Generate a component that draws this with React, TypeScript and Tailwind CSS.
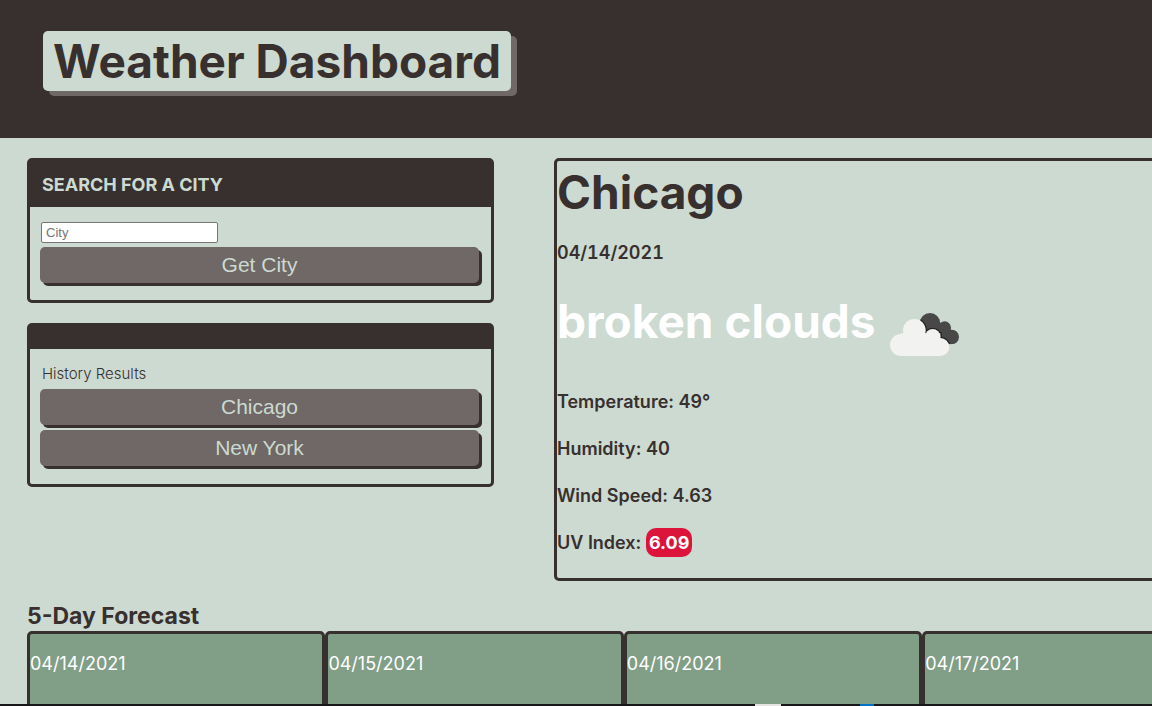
import type { ReactNode } from "react";

const forecastDates = ["04/14/2021", "04/15/2021", "04/16/2021", "04/17/2021", "04/18/2021"];
const cityHistory = ["Chicago", "New York"];

function CityButton({ children }: { children: ReactNode }) {
  return (
    <button
      type="button"
      className="block h-9 w-full rounded-[5px] bg-[#6f6866] font-['Liberation_Sans',sans-serif] text-[21px] leading-9 text-[#ccdad1] shadow-[3px_3px_0_#38302e]"
    >
      {children}
    </button>
  );
}

function CloudShape() {
  return (
    <>
      <circle cx="133" cy="121" r="34" />
      <circle cx="93" cy="165" r="33" />
      <circle cx="188" cy="140" r="23" />
      <circle cx="211" cy="171" r="27" />
      <rect x="93" y="130" width="118" height="68" />
    </>
  );
}

function BrokenCloudsIcon() {
  return (
    <svg className="h-20 w-[100px]" viewBox="18 -9 300 240" role="img" aria-label="broken clouds">
      <defs>
        <clipPath id="rear-cloud">
          <circle cx="180" cy="100" r="31" />
          <circle cx="224" cy="113" r="19" />
          <circle cx="245" cy="141" r="22" />
          <path d="M155 100H224L245 141V163H160Z" />
        </clipPath>
      </defs>
      <g clipPath="url(#rear-cloud)">
        <rect x="140" y="60" width="140" height="110" fill="#484849" />
        <g fill="#222" stroke="#222" strokeWidth="8">
          <CloudShape />
        </g>
      </g>
      <g fill="#f2f2f0">
        <CloudShape />
      </g>
    </svg>
  );
}

export default function App() {
  return (
    <div className="h-screen overflow-hidden bg-[#ccdad1] font-['Inter',sans-serif] text-[#38302e]">
      <div className="min-w-[1546px]">
        <header className="bg-[#38302e] px-[43px] pt-[31px] pb-[47px]">
          <h1 className="w-fit rounded-[5px] bg-[#ccdad1] px-[10px] text-[46px] leading-[60px] font-bold shadow-[6px_5px_0_#6f6866]">
            Weather Dashboard
          </h1>
        </header>

        <main className="px-[27px] pt-5">
          <div className="flex items-start gap-[60px]">
            <aside className="flex w-[467px] shrink-0 flex-col gap-5">
              <section className="rounded-[5px] border-[3px] border-[#38302e]">
                <h2 className="bg-[#38302e] px-3 pt-[11px] pb-[10px] text-[18px] leading-[25px] font-bold text-[#ccdad1]">
                  <label htmlFor="city">SEARCH FOR A CITY</label>
                </h2>
                <form className="pt-[15px] pr-3 pb-[17px] pl-[10px]" onSubmit={(e) => e.preventDefault()}>
                  <input
                    id="city"
                    type="text"
                    placeholder="City"
                    className="mb-1 ml-px block h-[21px] w-[177px] rounded-[2px] border border-[#767676] bg-white px-1 font-['Liberation_Sans',sans-serif] text-[13px] placeholder:text-[#757575]"
                  />
                  <CityButton>Get City</CityButton>
                </form>
              </section>

              <section className="rounded-[5px] border-[3px] border-[#38302e]">
                <div className="h-[23px] bg-[#38302e]" />
                <div className="pt-[14px] pr-3 pb-[18px] pl-[10px]">
                  <p className="mb-[5px] px-0.5 text-[15px] leading-[21px] font-light">History Results</p>
                  <div className="flex flex-col gap-[5px]">
                    {cityHistory.map((city) => (
                      <CityButton key={city}>{city}</CityButton>
                    ))}
                  </div>
                </div>
              </section>
            </aside>

            <section className="flex grow flex-col gap-[22px] rounded-[5px] border-[3px] border-[#38302e] pb-[23px] text-[18px] leading-[25px] font-semibold">
              <div className="flex flex-col gap-[17px]">
                <h2 className="text-[46px] leading-[62px] font-bold">Chicago</h2>
                <p className="tabular-nums">04/14/2021</p>
              </div>
              <div className="flex h-20 items-start text-white">
                <h3 className="pt-[3px] text-[46px] leading-[62px] font-bold">broken clouds</h3>
                <BrokenCloudsIcon />
              </div>
              <p>Temperature: 49°</p>
              <p>Humidity: 40</p>
              <p>Wind Speed: 4.63</p>
              <p>
                UV Index: <span className="rounded-[10px] bg-[#dc143c] px-[3px] py-1 font-bold text-white">6.09</span>
              </p>
            </section>
          </div>

          <h2 className="pt-5 text-[23px] leading-[30px] font-bold">5-Day Forecast</h2>
          <div className="grid grid-cols-5">
            {forecastDates.map((date) => (
              <article
                key={date}
                className="h-[300px] rounded-[5px] border-[3px] border-[#38302e] bg-[#819e87] pt-[17px] text-[18px] leading-[25px] text-white"
              >
                {date}
              </article>
            ))}
          </div>
        </main>
      </div>

      <div className="fixed inset-x-0 bottom-0 flex h-0.5 bg-[#17171a]">
        <div className="ml-[755px] w-[26px] bg-[#e6e4e3]" />
        <div className="ml-[79px] w-[14px] bg-[#0072c6]" />
      </div>
    </div>
  );
}
